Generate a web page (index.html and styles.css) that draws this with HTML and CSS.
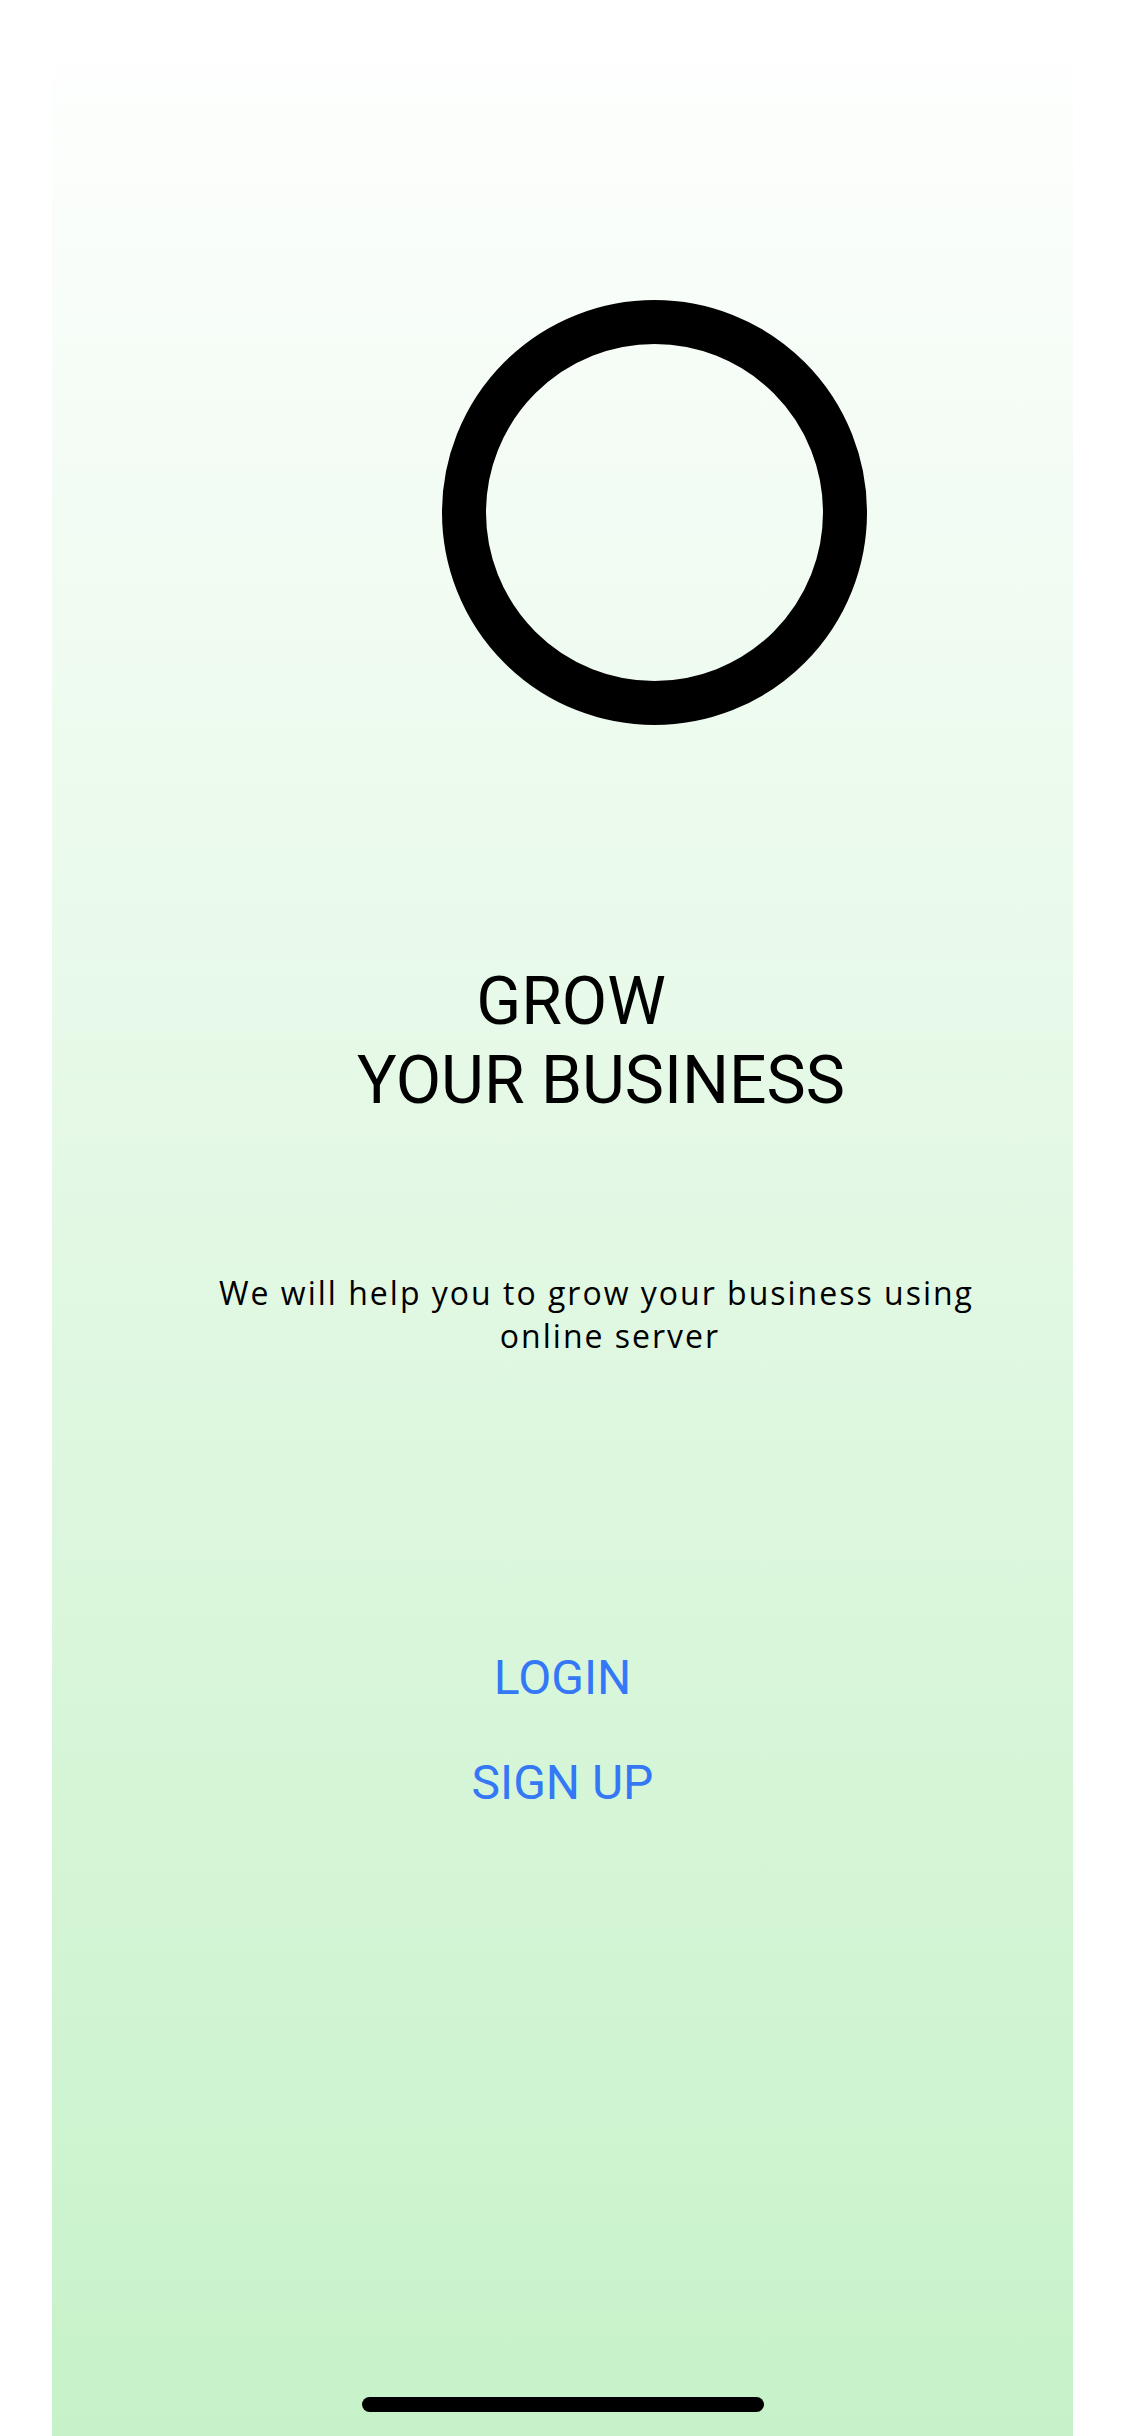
FILE: index.html
```html
<!DOCTYPE html>
<html lang="en">
<head>
<meta charset="utf-8">
<title>Grow your business</title>
<link rel="stylesheet" href="styles.css">
</head>
<body>
<div class="screen">
  <main class="panel">
    <div class="logo-ring"></div>
    <h1 class="title">
      <span class="title-line title-first">GROW</span>
      <span class="title-line">YOUR BUSINESS</span>
    </h1>
    <p class="subtitle">
      <span class="sub-line">We will help you to grow your business using</span>
      <span class="sub-line sub-second">online server</span>
    </p>
    <nav class="actions">
      <a class="action" href="#">LOGIN</a>
      <a class="action" href="#">SIGN UP</a>
    </nav>
    <div class="home-indicator"></div>
  </main>
</div>
</body>
</html>
```
FILE: styles.css
```css
* { box-sizing: border-box; }

html, body {
  margin: 0;
  padding: 0;
  background: #ffffff;
}

body {
  font-family: Roboto, "Liberation Sans", sans-serif;
  color: #000;
}

.screen {
  width: 1125px;
  height: 2436px;
  padding: 0 52px;
  background: #ffffff;
}

.panel {
  height: 2436px;
  display: flex;
  flex-direction: column;
  background: linear-gradient(180deg, #ffffff 0%, #f3fcf4 20%, #c7f2c9 100%);
}

.logo-ring {
  width: 425px;
  height: 425px;
  border: 44px solid #000;
  border-radius: 50%;
  margin-top: 300px;
  margin-left: 390px;
  flex: none;
}

.title {
  margin: 237px 0 0 0;
  padding-left: 77px;
  font-size: 66px;
  font-weight: 400;
  line-height: 79px;
  text-align: center;
}

.title-line { display: block; }
.title-first { padding-right: 60px; }

.subtitle {
  margin: 151px 0 0 0;
  padding-left: 68px;
  font-family: "Open Sans", Roboto, sans-serif;
  font-size: 32px;
  line-height: 43px;
  letter-spacing: 2px;
  text-align: center;
}

.sub-line { display: block; }
.sub-second { padding-left: 27px; }

.actions {
  margin-top: 291px;
  display: flex;
  flex-direction: column;
  align-items: center;
  gap: 45px;
}

.action {
  font-size: 48px;
  line-height: 60px;
  color: #3478f6;
  text-decoration: none;
}

.home-indicator {
  margin: auto auto 24px auto;
  width: 402px;
  height: 15px;
  border-radius: 8px;
  background: #000;
  flex: none;
}
```
